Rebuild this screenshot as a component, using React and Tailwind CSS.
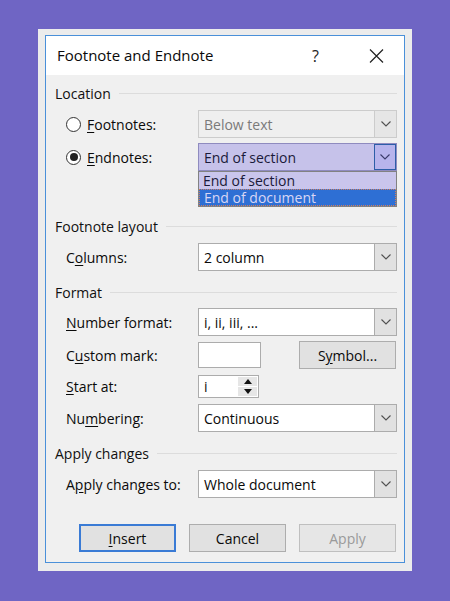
const font = { fontFamily: '"Open Sans", "Noto Sans", sans-serif' }

const Chevron = ({ color = "#505050" }) => (
  <svg width="10" height="6" viewBox="0 0 10 6" fill="none">
    <path d="M0.5 0.5 L5 5 L9.5 0.5" stroke={color} strokeWidth="1.1" />
  </svg>
)

const Key = ({ children }) => <span className="underline underline-offset-2">{children}</span>

const Heading = ({ children, className }) => (
  <div className={`flex items-center h-[20px] pl-[9px] ${className}`}>
    <span className="text-[14px] text-[#111] pr-[8px]">{children}</span>
    <div className="flex-1 h-px bg-[#dcdcdc]" />
  </div>
)

const Select = ({ value, className = "", disabled }) => (
  <div
    className={`flex h-[28px] w-[199px] border ${
      disabled ? "border-[#cccccc] bg-[#efefef]" : "border-[#acacac] bg-white"
    } ${className}`}
  >
    <div className={`flex-1 flex items-center pl-[5px] text-[14px] ${disabled ? "text-[#7a7a7a]" : "text-[#0a0a0a]"}`}>
      {value}
    </div>
    <div
      className={`w-[22px] flex items-center justify-center border-l ${
        disabled ? "border-[#cccccc] bg-[#e6e6e6]" : "border-[#acacac] bg-[#e1e1e1]"
      }`}
    >
      <Chevron />
    </div>
  </div>
)

const Row = ({ label, children, className = "" }) => (
  <div className={`flex items-center pl-[20px] ${className}`}>
    <div className="w-[132px] text-[14px] text-[#0a0a0a]">{label}</div>
    {children}
  </div>
)

const Radio = ({ checked }) => (
  <div className="w-[15px] h-[15px] rounded-full border border-[#333] bg-white flex items-center justify-center">
    {checked && <div className="w-[8px] h-[8px] rounded-full bg-[#222]" />}
  </div>
)

const Button = ({ children, primary, disabled }) => (
  <div
    className={`w-[97px] h-[28px] flex items-center justify-center text-[14px] ${
      primary
        ? "border-2 border-[#3a7bd5] bg-[#e1e1e1]"
        : disabled
        ? "border border-[#bfbfbf] bg-[#e6e6e6]"
        : "border border-[#adadad] bg-[#e1e1e1]"
    } ${disabled ? "text-[#9a9a9a]" : "text-[#0a0a0a]"}`}
  >
    {children}
  </div>
)

export default function App() {
  return (
    <div className="w-[450px] h-[601px] bg-[#6f65c4] flex justify-center pt-[29px]" style={font}>
      <div className="w-[374px] h-[542px] bg-[#ececec] p-[6px] pl-[7px]">
        <div className="w-[360px] h-[528px] border border-[#4a90d9] bg-[#f0f0f0] flex flex-col">
          <div className="h-[39px] bg-white flex items-center pl-[11px] pr-[20px]">
            <span className="text-[15px] text-[#0a0a0a] flex-1">Footnote and Endnote</span>
            <span className="text-[16px] text-[#222] mr-[50px]">?</span>
            <svg width="15" height="14" viewBox="0 0 15 14">
              <path d="M1 0.5 L14 13.5 M14 0.5 L1 13.5" stroke="#222" strokeWidth="1.2" />
            </svg>
          </div>

          <div className="flex flex-col pr-[7px]">
            <Heading className="mt-[8px]">Location</Heading>

            <div className="flex items-center pl-[20px] mt-[7px]">
              <div className="w-[132px] flex items-center gap-[6px] text-[14px] text-[#0a0a0a]">
                <Radio />
                <span>
                  <Key>F</Key>ootnotes:
                </span>
              </div>
              <Select value="Below text" disabled />
            </div>

            <div className="flex items-center pl-[20px] mt-[5px]">
              <div className="w-[132px] flex items-center gap-[6px] text-[14px] text-[#0a0a0a]">
                <Radio checked />
                <span>
                  <Key>E</Key>ndnotes:
                </span>
              </div>
              <div className="relative">
                <div className="flex h-[28px] w-[199px] border border-[#8f8bbf] bg-[#c6c2ea]">
                  <div className="flex-1 flex items-center pl-[5px] text-[14px] text-[#1a1a3a]">End of section</div>
                  <div className="w-[22px] flex items-center justify-center border border-[#2c5ea8] bg-[#b7b4ec]">
                    <Chevron color="#3a3a6a" />
                  </div>
                </div>
                <div className="absolute left-0 top-[28px] w-[199px] border border-[#828282] bg-[#c9c5ec] flex flex-col">
                  <div className="h-[17px] flex items-center pl-[4px] text-[14px] text-[#1a1a3a] leading-[15px] overflow-hidden">
                    End of section
                  </div>
                  <div className="h-[17px] flex items-center pl-[4px] text-[14px] text-[#d9d6f4] bg-[#2e6fd4] border border-dotted border-[#d08060] leading-[15px] overflow-hidden">
                    End of document
                  </div>
                </div>
              </div>
            </div>

            <Heading className="mt-[45px]">Footnote layout</Heading>
            <Row
              className="mt-[7px]"
              label={
                <>
                  C<Key>o</Key>lumns:
                </>
              }
            >
              <Select value="2 column" />
            </Row>

            <Heading className="mt-[11px]">Format</Heading>
            <Row
              className="mt-[6px]"
              label={
                <>
                  <Key>N</Key>umber format:
                </>
              }
            >
              <Select value="i, ii, iii, ..." />
            </Row>
            <Row
              className="mt-[5px]"
              label={
                <>
                  C<Key>u</Key>stom mark:
                </>
              }
            >
              <div className="w-[63px] h-[26px] border border-[#acacac] bg-white" />
              <div className="ml-[38px] w-[97px] h-[28px] border border-[#adadad] bg-[#e1e1e1] flex items-center justify-center text-[14px] text-[#0a0a0a]">
                S<Key>y</Key>mbol...
              </div>
            </Row>
            <Row
              className="mt-[6px]"
              label={
                <>
                  <Key>S</Key>tart at:
                </>
              }
            >
              <div className="w-[61px] h-[23px] border border-[#acacac] bg-white flex">
                <div className="flex-1 flex items-center pl-[5px] text-[14px] text-[#0a0a0a]">i</div>
                <div className="w-[19px] m-[1px] flex flex-col gap-px">
                  <div className="flex-1 bg-[#e6e6e6] flex items-center justify-center">
                    <svg width="8" height="5" viewBox="0 0 8 5">
                      <path d="M0 5 L4 0 L8 5 Z" fill="#111" />
                    </svg>
                  </div>
                  <div className="flex-1 bg-[#e6e6e6] flex items-center justify-center">
                    <svg width="8" height="5" viewBox="0 0 8 5">
                      <path d="M0 0 L8 0 L4 5 Z" fill="#111" />
                    </svg>
                  </div>
                </div>
              </div>
            </Row>
            <Row
              className="mt-[6px]"
              label={
                <>
                  Nu<Key>m</Key>bering:
                </>
              }
            >
              <Select value="Continuous" />
            </Row>

            <Heading className="mt-[11px]">Apply changes</Heading>
            <Row
              className="mt-[7px]"
              label={
                <>
                  A<Key>p</Key>ply changes to:
                </>
              }
            >
              <Select value="Whole document" />
            </Row>

            <div className="flex gap-[13px] pl-[33px] mt-[26px]">
              <Button primary>
                <Key>I</Key>nsert
              </Button>
              <Button>Cancel</Button>
              <Button disabled>Apply</Button>
            </div>
          </div>
        </div>
      </div>
    </div>
  )
}
